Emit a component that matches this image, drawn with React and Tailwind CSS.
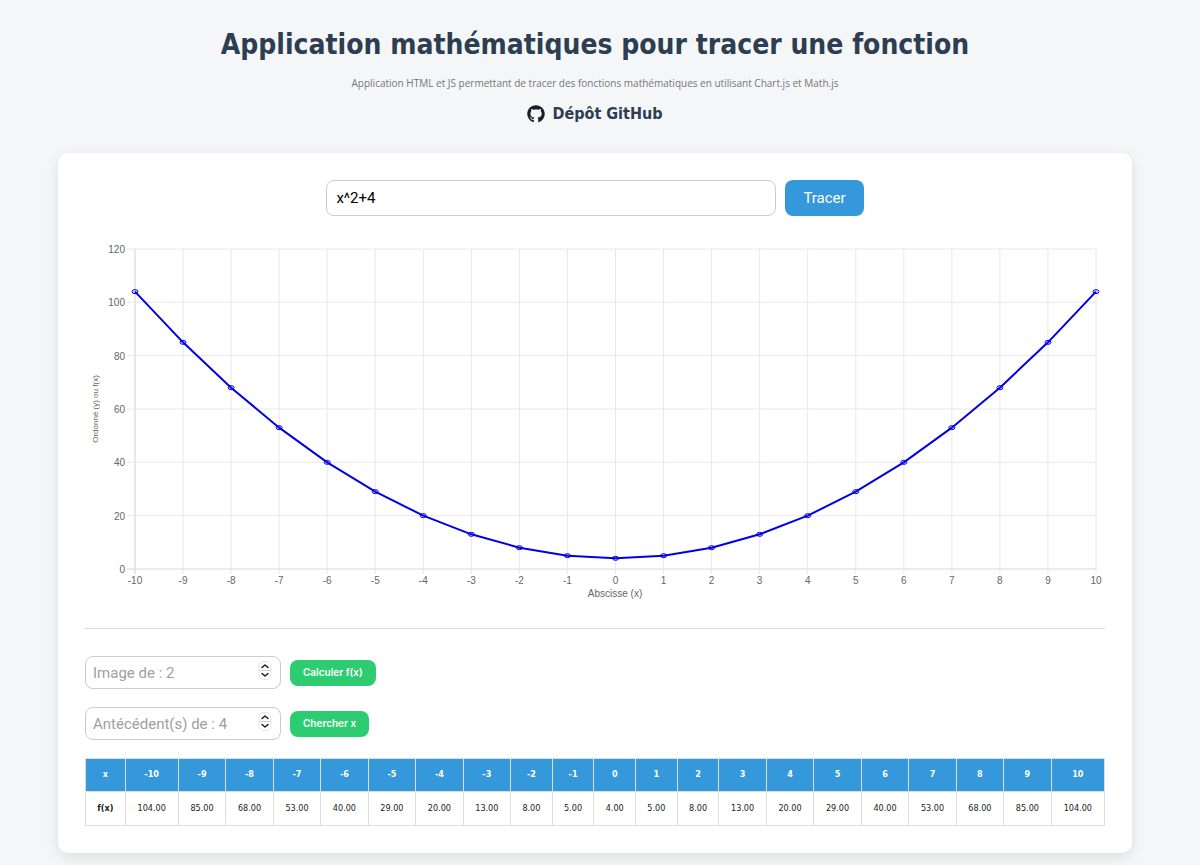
import React, { useState } from 'react';
import { FaGithub } from 'react-icons/fa';

const xs = Array.from({ length: 21 }, (_, i) => i - 10);
const points = xs.map((x) => ({ x, y: x * x + 4 }));
const yTicks = [0, 20, 40, 60, 80, 100, 120];

// Zone de tracé dans le viewBox
const plot = { left: 50, right: 1011, top: 10, bottom: 330 };
const px = (x) => plot.left + ((x + 10) / 20) * (plot.right - plot.left);
const py = (y) => plot.bottom - (y / 120) * (plot.bottom - plot.top);

const Chart = () => (
  <svg
    viewBox="0 0 1020 362"
    className="block h-auto w-full font-['Liberation_Sans',sans-serif]"
    role="img"
    aria-label="Courbe de f(x)"
  >
    {/* Grille verticale */}
    {xs.map((x) => (
      <g key={x}>
        <line x1={px(x)} x2={px(x)} y1={plot.top} y2={plot.bottom + 5} stroke={x === -10 ? '#d0d0d0' : '#e8e8e8'} />
        <text x={px(x)} y={345} textAnchor="middle" className="fill-[#666666] text-[10px]">{x}</text>
      </g>
    ))}

    {/* Grille horizontale */}
    {yTicks.map((y) => (
      <g key={y}>
        <line x1={plot.left - 8} x2={plot.right} y1={py(y)} y2={py(y)} stroke={y === 0 ? '#d8d8d8' : '#e8e8e8'} />
        <text x={40} y={py(y) + 4} textAnchor="end" className="fill-[#666666] text-[10px]">{y}</text>
      </g>
    ))}

    <text x={530} y={358} textAnchor="middle" className="fill-[#666666] text-[10px]">Abscisse (x)</text>
    <text transform="translate(13 170) rotate(-90)" textAnchor="middle" className="fill-[#666666] text-[8px]">
      Ordonné (y) ou f(x)
    </text>

    <polyline
      points={points.map((p) => `${px(p.x)},${py(p.y)}`).join(' ')}
      fill="none"
      stroke="#0000e6"
      strokeWidth="2"
      strokeLinejoin="round"
    />
    {points.map((p) => (
      <ellipse key={p.x} cx={px(p.x)} cy={py(p.y)} rx="3" ry="2" fill="rgba(0,0,255,0.1)" stroke="#0000e6" />
    ))}
  </svg>
);

const NumberField = ({ label, placeholder, action }) => (
  <div className="flex items-center gap-[9px]">
    <div className="relative">
      <input
        type="number"
        aria-label={label}
        placeholder={placeholder}
        className="block h-[33px] w-[196px] appearance-none rounded-lg border border-[#cccccc] bg-white pr-8 pl-[7px] text-[15px] placeholder:text-[#a0a0a0] [&::-webkit-inner-spin-button]:appearance-none"
      />
      <svg viewBox="0 0 14 20" className="pointer-events-none absolute top-[5px] right-[9px] h-5 w-[14px]" fill="none">
        <rect x="1" y="0.5" width="12" height="18" rx="5" fill="#fff" stroke="#e4e4e4" />
        <path d="M1 9.5h12" stroke="#d4d4d4" />
        <path d="M4 6.5 7 4l3 2.500M4 12.500 7 15l3-2.500" stroke="#1a1a1a" strokeWidth="1.500" strokeLinecap="round" strokeLinejoin="round" />
      </svg>
    </div>
    <button type="button" className="h-[26px] rounded-lg bg-[#2ecc71] px-[13px] font-[Inter,sans-serif] text-[10px] font-semibold text-white">
      {action}
    </button>
  </div>
);

const App = () => {
  const [expression, setExpression] = useState('x^2+4');

  return (
    <div className="min-h-screen bg-[#f4f6f8] pt-[25px] pr-[68px] pb-3 pl-[58px] font-['DejaVu_Sans_Condensed','Noto_Sans',sans-serif] text-[#333333]">
      <header className="flex flex-col items-center">
        <h1 className="text-[28px] leading-10 font-bold text-[#2c3e50]">
          Application mathématiques pour tracer une fonction
        </h1>
        <p className="mt-[10px] font-['Open_Sans',sans-serif] text-[10px] leading-4 text-[#777777]">
          Application HTML et JS permettant de tracer des fonctions mathématiques en utilisant Chart.js et Math.js
        </p>
        <a href="https://github.com" className="mt-[11px] flex items-center gap-[7px] text-[16px] leading-6 font-bold text-[#2c3e50]">
          <FaGithub className="size-[18px] text-[#1b1f23]" />
          Dépôt GitHub
        </a>
      </header>

      <main className="mt-[27px] rounded-[10px] bg-white p-[27px] font-[Roboto,sans-serif] shadow-[0_4px_14px_rgba(0,0,0,0.1)]">
        <form className="flex justify-center gap-[9px]" onSubmit={(e) => e.preventDefault()}>
          <input
            type="text"
            aria-label="Fonction"
            value={expression}
            onChange={(e) => setExpression(e.target.value)}
            className="h-9 w-[450px] rounded-lg border border-[#cccccc] bg-white px-[9px] text-[15px] text-black"
          />
          <button type="submit" className="h-9 rounded-lg bg-[#3498db] px-[18px] text-[15px] text-white">
            Tracer
          </button>
        </form>

        <div className="mt-[23px]">
          <Chart />
        </div>

        <hr className="my-[27px] border-[#dddddd]" />

        <div className="flex flex-col gap-[18px]">
          <NumberField label="Image de" placeholder="Image de : 2" action="Calculer f(x)" />
          <NumberField label="Antécédent(s) de" placeholder="Antécédent(s) de : 4" action="Chercher x" />
        </div>

        {/* Tableau de valeurs */}
        <table className="mt-[18px] w-full border-collapse text-center font-['DejaVu_Sans_Condensed','Noto_Sans',sans-serif] text-[9px] text-[#222222]">
          <thead>
            <tr className="h-[33px] bg-[#3498db] text-white">
              <th scope="col" className="border border-[#dddddd] px-[9px]">x</th>
              {points.map((p) => (
                <th key={p.x} scope="col" className="border border-[#dddddd] px-[9px]">{p.x}</th>
              ))}
            </tr>
          </thead>
          <tbody>
            <tr className="h-[34px]">
              <th scope="row" className="border border-[#dddddd] px-[9px]">f(x)</th>
              {points.map((p) => (
                <td key={p.x} className="border border-[#dddddd] px-[9px]">{p.y.toFixed(2)}</td>
              ))}
            </tr>
          </tbody>
        </table>
      </main>
    </div>
  );
};

export default App;
